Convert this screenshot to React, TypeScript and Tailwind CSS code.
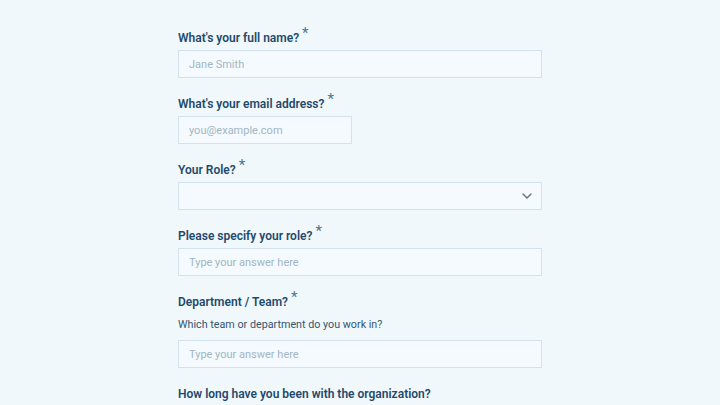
import React from "react";

const font = { fontFamily: "Roboto, 'Noto Sans', sans-serif" };

function Label({ children, required = true }: { children: React.ReactNode; required?: boolean }) {
  return (
    <div className="h-[20px] pt-[1px] text-[12px] leading-[20px] font-semibold text-[#1f4a6b] whitespace-nowrap">
      {children}
      {required && (
        <span className="ml-[3px] text-[15px] leading-none font-normal text-[#4f7591] relative top-[-4px]">*</span>
      )}
    </div>
  );
}

function TextInput({ placeholder, narrow = false }: { placeholder: string; narrow?: boolean }) {
  return (
    <input
      className={`${narrow ? "w-[174px]" : "w-full"} h-[28px] mt-[3px] px-[10px] border border-[#d3e2eb] bg-[#f4fafd] text-[11px] text-[#1f4a6b] placeholder:text-[#a2b6c4] outline-none`}
      placeholder={placeholder}
      style={font}
    />
  );
}

export default function App() {
  return (
    <div className="w-[720px] h-[405px] overflow-hidden bg-[#f0f8fc]" style={font}>
      <div className="mx-auto w-[364px] pt-[27px] flex flex-col gap-[15px]">
        <div className="flex flex-col">
          <Label>What's your full name?</Label>
          <TextInput placeholder="Jane Smith" />
        </div>
        <div className="flex flex-col">
          <Label>What's your email address?</Label>
          <TextInput placeholder="you@example.com" narrow />
        </div>
        <div className="flex flex-col">
          <Label>Your Role?</Label>
          <div className="mt-[3px] h-[28px] w-full border border-[#d3e2eb] bg-[#f4fafd] flex items-center justify-end pr-[9px]">
            <svg width="10" height="6" viewBox="0 0 10 6" fill="none" stroke="#5d7384" strokeWidth="1.4" strokeLinecap="round" strokeLinejoin="round">
              <path d="M1 1l4 4 4-4" />
            </svg>
          </div>
        </div>
        <div className="flex flex-col">
          <Label>Please specify your role?</Label>
          <TextInput placeholder="Type your answer here" />
        </div>
        <div className="flex flex-col">
          <Label>Department / Team?</Label>
          <div className="mt-[6px] h-[16px] text-[10.75px] leading-[16px] text-[#34566f]">Which team or department do you work in?</div>
          <div className="mt-[4px] flex flex-col">
            <TextInput placeholder="Type your answer here" />
          </div>
        </div>
        <div className="flex flex-col">
          <Label required={false}>How long have you been with the organization?</Label>
        </div>
      </div>
    </div>
  );
}
